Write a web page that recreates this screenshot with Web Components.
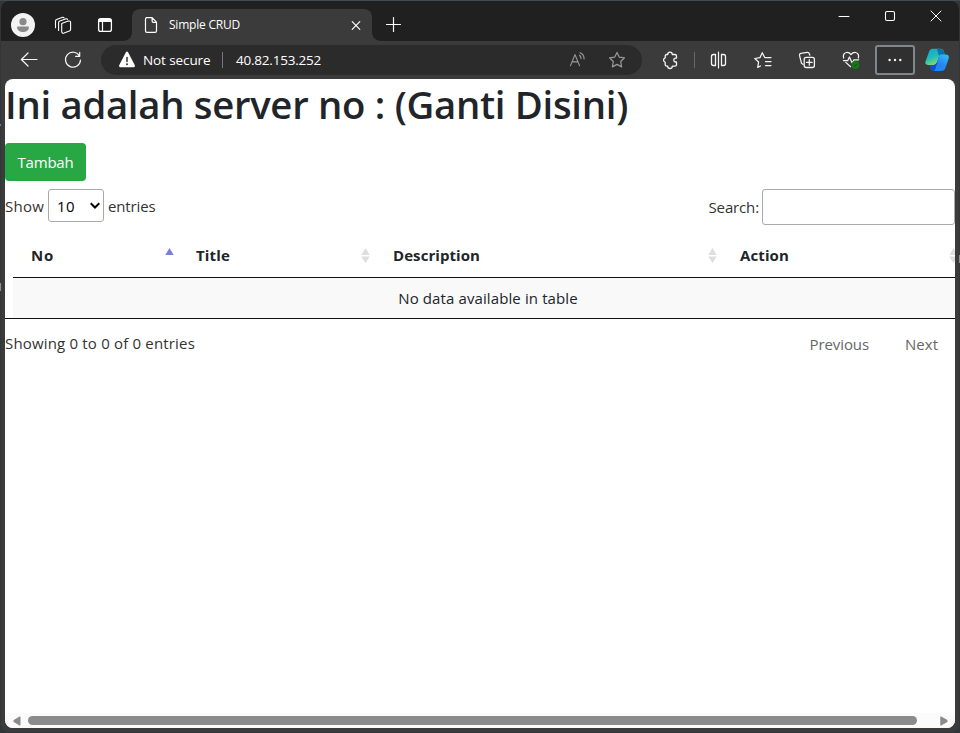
<!DOCTYPE html>
<html lang="id"><head><meta charset="utf-8"><title>Simple CRUD</title>
<style>html,body{margin:0;height:100%;overflow:hidden}body{background:#30373b;font-family:"Open Sans","Noto Sans",sans-serif;color:#212529}</style></head>
<body><browser-window></browser-window>
<script>
const define=(name,html,init)=>{
  const t=document.createElement('template');t.innerHTML=html;
  customElements.define(name,class extends HTMLElement{
    connectedCallback(){
      if(!this.shadowRoot){this.attachShadow({mode:'open'}).append(t.content.cloneNode(true));}
      if(init)init(this,this.shadowRoot);
    }
  });
};

const L='fill="none" stroke="currentColor" stroke-linecap="round" stroke-linejoin="round"';
const ICONS={
  avatar:'<circle cx="12" cy="12" r="12" fill="#f3f3f3"/><circle cx="12" cy="8.7" r="3.6" fill="#8a8a8a"/><path d="M6.2 13.6h11.6v1.1c0 2.7-2.6 4.2-5.8 4.2s-5.8-1.5-5.8-4.2z" fill="#8a8a8a"/>',
  spaces:`<path ${L} stroke-width="1.1" d="M10.7 10.6 17.2 8.1Q19.6 7.6 19.6 9.4V16.2Q19.6 17.6 18.4 18.1L13.1 20.1Q10.7 20.6 10.7 18.6ZM7.6 17.4V9.6Q7.6 8.5 8.8 8L14.5 5.9Q16 5.5 16.6 6.3M4.5 14.8V8Q4.5 6.9 5.6 6.4L11 4.4Q12.5 4 13.1 4.8"/>`,
  tabs:`<rect x="5.6" y="5.6" width="12.8" height="12.8" rx="2.2" ${L} stroke-width="1.3"/><path d="M5.6 7.6q0-2 2-2h8.8q2 0 2 2v1.3H5.6z" fill="currentColor"/><path d="M9.5 9V18" ${L} stroke-width="1.2"/>`,
  file:`<path ${L} stroke-width="1.2" d="M7.3 4.6h5.8l4.4 4.6v8.8q0 1.4-1.4 1.4H7.9q-1.4 0-1.4-1.4V6q0-1.4 1.4-1.4M13.1 4.7v3.3q0 1.3 1.3 1.3h3"/>`,
  x:`<path ${L} stroke-width="1.2" d="m8.2 8.7 7.6 7.6M15.8 8.7l-7.6 7.6"/>`,
  plus:`<path ${L} stroke-width="1.2" d="M5.5 11.5h14M12.5 4.5v14"/>`,
  min:`<path ${L} stroke-linecap="butt" d="M7 12.5h10"/>`,
  max:`<rect x="7.5" y="7.5" width="9" height="9" rx="1.4" ${L} stroke-width="1.1"/>`,
  close:`<path ${L} d="m7 7 10 10M17 7 7 17"/>`,
  back:`<path ${L} stroke-width="1.2" d="M20 11.5H4.5M11 5 4.4 11.5 11 18"/>`,
  reload:`<path ${L} stroke-width="1.2" d="M18.6 8.1A7.5 7.5 0 1 0 19.5 12M18.7 4.3v4h-4.1"/>`,
  warn:'<path d="M10.8 4.6q1.2-2 2.4 0l6.5 12.5q.9 2-1.2 2.2h-13q-2.1-.2-1.2-2.2z" fill="#fff"/><path d="M12 9.4v4.2" stroke="#333" stroke-width="1.5" stroke-linecap="round"/><circle cx="12" cy="16.2" r="1" fill="#333"/>',
  read:`<path ${L} stroke-width="1.15" d="M5.5 17.6 10 6.6 14.5 17.6M7.2 13.8h5.6M14.5 7.3q1.5 1.1 1.5 3.3M15.1 4.7q4 1.6 4 6.2"/>`,
  star:`<path ${L} stroke-width="1.2" d="m12 4.4 2.2 4.7 5.3.7-3.8 3.7.9 5.4-4.6-2.5-4.6 2.5.9-5.4-3.8-3.7 5.3-.7z"/>`,
  puzzle:`<path ${L} stroke-width="1.3" d="M9.3 6.5h.4a2.3 2.3 0 0 1 4.6 0H17q1.5 0 1.5 1.5v2.2h-.8a1.9 1.9 0 0 0 0 3.8h.8v2.8q0 1.4-1.5 1.4h-2.7a2.3 2.3 0 0 1-4.6 0h-.9q-1.6 0-1.6-1.4v-2.5a2.3 2.3 0 0 1 0-4.4V8q0-1.5 1.6-1.5z"/>`,
  split:`<path ${L} stroke-width="1.3" d="M8.5 6.5H6.5q-2 0-2 2v7q0 2 2 2h2V6.5M14.5 6.5H16.5q2 0 2 2v7q0 2-2 2h-2V6.5"/><path d="M11.5 4v16" ${L} stroke-width="1.2"/>`,
  favs:`<path ${L} stroke-width="1.25" d="M9.5 18 6.7 19.4 7.6 14 3.8 10.5 8.9 9.7 11.3 4.7 13.7 9.5H20M14.5 13.5H20M14.5 17.5H20"/>`,
  collect:`<path ${L} stroke-width="1.25" d="M8.2 16.4 6.5 15.3 4.5 7.4Q4.2 5.8 5.8 5.3L12.2 4.4Q14 4.3 14.4 6L14.8 7.2"/><rect x="9.2" y="9.3" width="10.2" height="10.2" rx="2" ${L} stroke-width="1.3"/><path ${L} stroke-width="1.25" d="M14.3 11.6v5.6M11.5 14.4h5.6"/>`,
  heart:`<path ${L} stroke-width="1.25" d="M4.7 10C3.6 7.3 5 4.9 7.5 4.5 9.5 4.3 11 5.2 12 6.6 13 5.2 14.5 4.3 16.5 4.5 19 4.9 20.3 7.3 19.3 10M4.5 12.7h4.2l1.7-3.7 2.8 6 1.7-3.2h4.8M6.8 14.4 11.6 18.7"/><circle cx="16.4" cy="17" r="3.9" fill="#107c10"/><path d="m14.7 17 1.2 1.2 2.2-2.4" fill="none" stroke="#333" stroke-width=".9"/>`,
  more:'<g fill="currentColor"><circle cx="6.6" cy="12" r="1.2"/><circle cx="12" cy="12" r="1.2"/><circle cx="17.3" cy="12" r="1.2"/></g>',
  copilot:'<defs><linearGradient id="a" x2=".5" y2="1"><stop stop-color="#17a6d1"/><stop offset=".55" stop-color="#20b9bd"/><stop offset="1" stop-color="#8be05c"/></linearGradient><linearGradient id="b" x1="1" x2=".3" y2="1"><stop stop-color="#31c3f4"/><stop offset=".6" stop-color="#2485f3"/><stop offset="1" stop-color="#168aff"/></linearGradient></defs><path d="M4.3 3Q5.3 .8 7.6.8h8.1Q18 .8 19 4l.7 2.4h-3.1q-2 0-2.6 2l-2.3 6.9Q11 17 8.8 17H3.4Q-.7 17 .6 13.3z" fill="url(#a)"/><path d="M12 1h3.7Q18 1 19 4l.8 2.5h-3.3q-1.7 0-2.4 1.8z" fill="#0872a8"/><path d="M15.7 6.6h5q4 0 2.9 4.2l-3 8.8q-1.1 3.4-3.9 3.4H8.4q-2.1 0-3-3l-.8-3h4.1q2.2 0 3-2.3l2.3-6.6q.4-1.4 1.7-1.5z" fill="url(#b)"/><path d="M4.6 17h4.1q1.9 0 2.7-2l1.1-1-2 6.5Q9.8 23 8.4 23q-2.1 0-3-3z" fill="#174cc9"/>',
  chevron:'<path d="m1.2 2 3.8 3.8L8.8 2" fill="none" stroke="#000" stroke-width="1.8"/>'
};
define('ui-icon','<style>:host{display:flex;align-items:center;justify-content:center;flex:none}svg{display:block;flex:none;width:24px;height:24px}</style><div></div>',(h,r)=>{
  r.querySelector('div').innerHTML=`<svg viewBox="0 0 24 24">${ICONS[h.getAttribute('name')]}</svg>`;
});

/* Single-line label whose tracking is tuned to a nominal advance width */
define('ui-label','<style>:host{display:block;flex:none;white-space:nowrap}span{display:inline-block}</style><span><slot></slot></span>',(h,r)=>{
  const w=+h.getAttribute('w'),s=r.querySelector('span');
  if(w)s.style.letterSpacing=((w-s.getBoundingClientRect().width)/h.textContent.length)+'px';
});

define('browser-tab',`<style>
:host{display:flex;align-items:center;position:relative;box-sizing:border-box;width:240px;height:32px;background:#3b3b3b;border-radius:8px 8px 0 0;padding-left:7px}
:host::before,:host::after{content:"";position:absolute;bottom:0;width:8px;height:8px}
:host::before{left:-8px;background:radial-gradient(circle at 0 0,transparent 7.5px,#3b3b3b 8px)}
:host::after{right:-8px;background:radial-gradient(circle at 100% 0,transparent 7.5px,#3b3b3b 8px)}
ui-label{margin:0 0 0 6px;font-size:12px;line-height:16px;width:175px;color:#fff}
</style><ui-icon name="file"></ui-icon><ui-label w="71"><slot></slot></ui-label><ui-icon name="x"></ui-icon>`,(h,r)=>{
  const s=r.querySelector('ui-label').shadowRoot.querySelector('span');
  s.style.letterSpacing='0';
  s.style.letterSpacing=((71-s.getBoundingClientRect().width)/h.textContent.length)+'px';
});

define('title-bar',`<style>
:host{display:flex;height:40px;background:#202020;color:#fff;padding-left:1px}
.l{display:flex;padding-top:8px;flex:1}.l>ui-icon{height:32px;width:42px}
browser-tab{margin-left:4px}.r{display:flex;height:30px}.r ui-icon{width:46px}
</style><div class="l"><ui-icon name="avatar"></ui-icon><ui-icon name="spaces" style="width:38px"></ui-icon><ui-icon name="tabs" style="width:46px"></ui-icon><browser-tab>Simple CRUD</browser-tab><ui-icon name="plus"></ui-icon></div>
<div class="r"><ui-icon name="min"></ui-icon><ui-icon name="max"></ui-icon><ui-icon name="close"></ui-icon></div>`);

define('address-bar',`<style>
:host{display:flex;align-items:center;box-sizing:border-box;width:541px;height:30px;border-radius:15px;background:#2b2b2b;padding:0 5px 0 14px;font-size:13.5px;line-height:30px;color:#fff}
i{width:1px;height:16px;background:#777;margin:0 13px 0 12px}.u{flex:1}.d{color:#999;width:40px}
</style><ui-icon name="warn"></ui-icon><ui-label w="67.5" style="margin-left:4px;width:67px">Not secure</ui-label><i></i><ui-label class="u" w="85">40.82.153.252</ui-label><ui-icon class="d" name="read"></ui-icon><ui-icon class="d" name="star"></ui-icon>`);

define('tool-bar',`<style>
:host{display:flex;align-items:center;height:38px;background:#3b3b3b;color:#f4f4f4;padding-left:6px}
ui-icon{width:44px;height:30px}address-bar{margin:0 6px}i{width:1px;height:16px;background:#686868;margin:0 2px 0 2px}
.m{box-sizing:border-box;width:40px;border:2px solid #80868b;border-radius:3px;background:#303030;margin-left:2px}
</style><ui-icon name="back"></ui-icon><ui-icon name="reload"></ui-icon><address-bar></address-bar><ui-icon name="puzzle"></ui-icon><i></i><ui-icon name="split"></ui-icon><ui-icon name="favs"></ui-icon><ui-icon name="collect"></ui-icon><ui-icon name="heart"></ui-icon><ui-icon name="more" class="m"></ui-icon><ui-icon name="copilot"></ui-icon>`);

define('sort-arrows',`<style>:host{display:block;width:9px;height:16px}svg{display:block}</style><svg width="9" height="16"><path class="u" d="M.3 7 4.5 0 8.7 7z" fill="#dedede"/><path class="d" d="M.3 8.6h8.4L4.5 15.2z" fill="#dedede"/></svg>`,(h,r)=>{
  if(h.hasAttribute('asc')){r.querySelector('.u').setAttribute('fill','#7a7fdd');r.querySelector('.d').setAttribute('fill','none');}
});

define('data-table',`<style>
:host{display:block;height:86px;border-bottom:1px solid #111;box-sizing:border-box;overflow:hidden}
.t{width:950px;margin-left:8px}
.h{display:grid;grid-template-columns:165px 197px 347px 241px;height:44px;border-bottom:1px solid #111;font-weight:700;font-size:15px;line-height:45px}
.h>div{display:flex;justify-content:space-between;padding:0 5px 0 18px}.h>div:first-child{padding-right:4px}sort-arrows{margin-top:15px}
.e{display:flex;justify-content:center;background:#f9f9f9;height:45px;line-height:41px;font-size:15px}
</style><div class="t"><div class="h">
<div><ui-label w="23">No</ui-label><sort-arrows asc></sort-arrows></div><div><ui-label w="34">Title</ui-label><sort-arrows></sort-arrows></div><div><ui-label w="87">Description</ui-label><sort-arrows></sort-arrows></div><div><ui-label w="49">Action</ui-label><sort-arrows></sort-arrows></div>
</div><div class="e"><ui-label w="179.5">No data available in table</ui-label></div></div>`);

define('page-length',`<style>
:host{display:flex;height:33px;line-height:34px;color:#333;font-size:15px}
.s{display:flex;box-sizing:border-box;width:56px;height:33px;border:1px solid #aaa;border-radius:3px;padding-left:8px;margin:0 4px 0 4px;line-height:32px;color:#000;align-items:center;justify-content:space-between}
svg{margin-right:2px}
</style><ui-label w="39">Show</ui-label><div class="s"><ui-label w="18">10</ui-label><svg width="12" height="9" viewBox="0 0 10 8">${ICONS.chevron}</svg></div><ui-label w="47.5">entries</ui-label>`);

define('search-field',`<style>
:host{display:flex;height:36px;line-height:36px;font-size:15px;color:#333}
input{box-sizing:border-box;width:193px;height:36px;border:1px solid #aaa;border-radius:3px;background:transparent;margin:0 0 0 3px;padding:5px}
</style><ui-label w="50.5">Search:</ui-label><input aria-label="Search">`);

define('scroll-bar',`<style>
:host{display:flex;align-items:center;height:15px;background:#fbfbfb;padding:0 7px 0 8px}
i{width:889px;height:9px;border-radius:5px;background:#8b8b8b;margin:0 auto 0 7px}
</style><svg width="8" height="10"><path d="M7 .8v8.4L1 5.7Q.3 5 1 4.3z" fill="#8b8b8b" stroke="#8b8b8b" stroke-linejoin="round"/></svg><i></i><svg width="8" height="10"><path d="M.8.8v8.4L7 5.7q.7-.7 0-1.4z" fill="#8b8b8b" stroke="#8b8b8b" stroke-linejoin="round"/></svg>`);

define('crud-page',`<style>
:host{display:flex;flex-direction:column;background:#fff;border-radius:8px;overflow:hidden;height:649px;width:950px;font-size:15px}
h1{margin:0;font-weight:600;font-size:38.3px;line-height:51px;height:64px}
.b{width:81px;height:38px;box-sizing:border-box;background:#28a745;color:#fff;border:0;border-radius:4px;padding:0 0 0 12.5px;font:15px/38px "Open Sans",sans-serif;text-align:left}
.c{display:flex;justify-content:space-between;margin-top:8px;height:44px;overflow:visible}
.f{display:flex;justify-content:space-between;color:#333;line-height:20px;padding:14px 17px 0 0;flex:1}
.p{display:flex;gap:36px;color:#666;padding-top:1px}
</style><h1><ui-label w="623">Ini adalah server no : (Ganti Disini)</ui-label></h1>
<button class="b"><ui-label w="56">Tambah</ui-label></button>
<div class="c"><page-length></page-length><search-field></search-field></div>
<data-table></data-table>
<div class="f"><ui-label w="190">Showing 0 to 0 of 0 entries</ui-label><div class="p"><ui-label w="59.5">Previous</ui-label><ui-label w="33">Next</ui-label></div></div>
<scroll-bar></scroll-bar>`);

define('browser-window',`<style>
:host{display:block;box-sizing:border-box;width:960px;height:733px;padding:1px;background:
linear-gradient(#8b9296,#8b9296) 0 283px/1px 8px no-repeat,linear-gradient(#5888aa,#5888aa) 0 124px/1px 2px no-repeat,
linear-gradient(#8b9296,#8b9296) 100% 255px/1px 8px no-repeat,linear-gradient(#424b50,#424b50) 0 0/100% 1px no-repeat,#30373b}
.w{height:731px;border-radius:8px;background:#3b3b3b;overflow:hidden}
crud-page{margin-left:4px}
</style><div class="w"><title-bar></title-bar><tool-bar></tool-bar><crud-page></crud-page></div>`);
</script></body></html>
